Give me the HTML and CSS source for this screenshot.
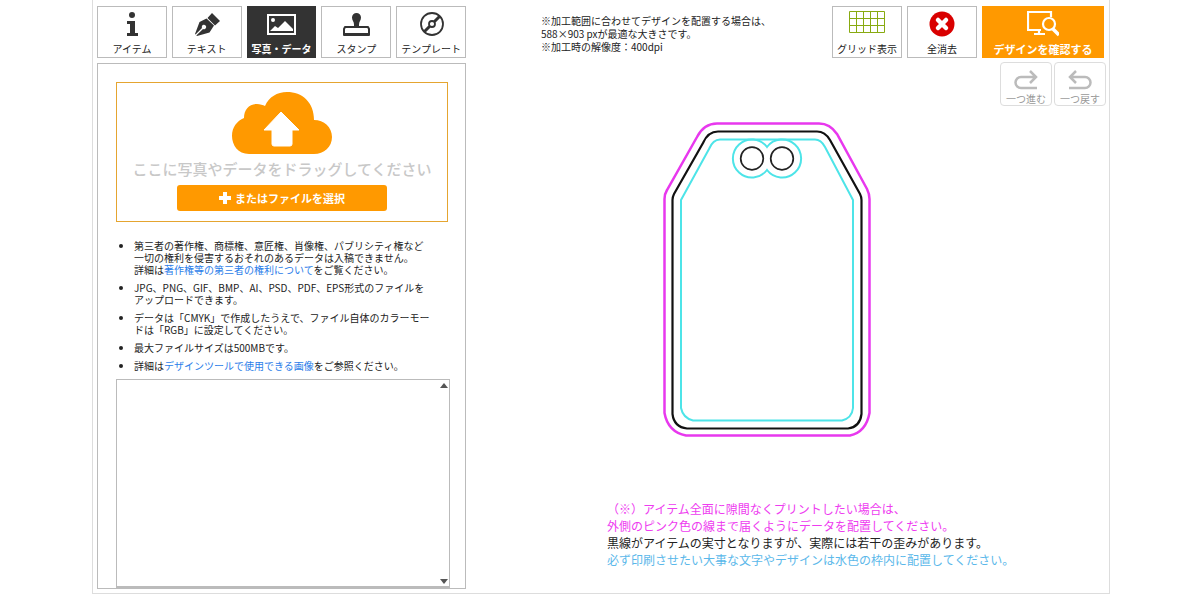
FILE: index.html
```html
<!DOCTYPE html>
<html lang="ja">
<head>
<meta charset="utf-8">
<title>デザインツール</title>
<link rel="stylesheet" href="styles.css">
</head>
<body>
<main class="tool">
  <section class="side">
    <nav class="tabs">
      <button class="tab" type="button">
        <svg class="icon" viewBox="0 0 32 28" fill="#333"><circle cx="16" cy="5" r="3"/><path d="M11 11h8v12h3v3H11v-3h3v-9h-3z"/></svg>
        <span>アイテム</span>
      </button>
      <button class="tab" type="button">
        <svg class="icon" viewBox="0 0 32 28" fill="#333"><path d="M21 3l8 8-5 4.500-7.500-7.500zM15.500 8.500l7.500 7-4.500 7L6 26l-.7-.6L12 19a2.200 2.200 0 1 0-1-1L4.500 24.500 4 24l4.500-12z"/></svg>
        <span>テキスト</span>
      </button>
      <button class="tab tab-on" type="button" aria-pressed="true">
        <svg class="icon" viewBox="0 0 32 28"><rect x="3" y="5" width="27" height="19" fill="none" stroke="#fff" stroke-width="2"/><circle cx="8" cy="10" r="2" fill="#fff"/><path d="M5 21l5-5 3 2 7-7 8 8v2z" fill="#fff"/></svg>
        <span>写真・データ</span>
      </button>
      <button class="tab" type="button">
        <svg class="icon" viewBox="0 0 32 28"><path d="M12 7.500a4.500 4.500 0 1 1 9 0c0 3-2 4-2 7v3h-5v-3c0-3-2-4-2-7z" fill="#333"/><path d="M5 17h23l1 2v6H4v-6z" fill="#fff" stroke="#333" stroke-width="2" stroke-linejoin="round"/><path d="M4 23h25v3H4z" fill="#333"/></svg>
        <span>スタンプ</span>
      </button>
      <button class="tab" type="button">
        <svg class="icon" viewBox="0 0 32 28" fill="none" stroke="#333"><circle cx="17" cy="14" r="11" stroke-width="1.800"/><circle cx="17" cy="14" r="3" stroke-width="1.800"/><path d="M19.500 11.500L25 6M14.500 16.500L9 22" stroke-width="3"/></svg>
        <span>テンプレート</span>
      </button>
    </nav>
    <div class="panel">
      <div class="drop">
        <svg class="cloud" viewBox="0 0 102 64"><path d="M18 63C7 63 1 54 1 45c0-9 5-15 12-18 0-8 5-14 13-14 3 0 6 1 8 2C38 6 46 1 56 1c15 0 27 10 27 28 10 0 18 7 18 17s-8 17-18 17z" fill="#f90"/><path d="M50 21l18 18h-7v14q0 2-2 2H43q-2 0-2-2V39h-8z" fill="#fff" stroke="#fff" stroke-linejoin="round"/></svg>
        <p class="drop-text">ここに写真やデータをドラッグしてください</p>
        <button class="pick" type="button">
          <svg class="plus" viewBox="0 0 12 12"><path d="M6 0v12M0 6h12" stroke="#fff" stroke-width="4"/></svg>
          <span>またはファイルを選択</span>
        </button>
      </div>
      <ul class="rules">
        <li>第三者の著作権、商標権、意匠権、肖像権、パブリシティ権など<br>一切の権利を侵害するおそれのあるデータは入稿できません。<br>詳細は<a href="#rights">著作権等の第三者の権利について</a>をご覧ください。</li>
        <li>JPG、PNG、GIF、BMP、AI、PSD、PDF、EPS形式のファイルを<br>アップロードできます。</li>
        <li>データは「CMYK」で作成したうえで、ファイル自体のカラーモー<br>ドは「RGB」に設定してください。</li>
        <li>最大ファイルサイズは500MBです。</li>
        <li>詳細は<a href="#images">デザインツールで使用できる画像</a>をご参照ください。</li>
      </ul>
      <div class="files">
        <svg class="arrow" viewBox="0 0 8 6"><path d="M4 0l4 5H0z" fill="#555"/></svg>
        <svg class="arrow" viewBox="0 0 8 6"><path d="M0 1h8L4 6z" fill="#555"/></svg>
      </div>
    </div>
  </section>

  <section class="work">
    <header class="head">
      <p class="size-note">※加工範囲に合わせてデザインを配置する場合は、<br>588×903 pxが最適な大きさです。<br>※加工時の解像度：400dpi</p>
      <div class="actions">
        <div class="bar">
          <button class="tab" type="button">
            <svg class="grid-icon" viewBox="0 0 38 24"><path d="M1.500 1.500h35v21h-35zM1.500 8.500h35M1.500 15.500h35M8.500 1.500v21M15.500 1.500v21M22.500 1.500v21M29.500 1.500v21" fill="none" stroke="#8a1"/></svg>
            <span>グリッド表示</span>
          </button>
          <button class="tab" type="button">
            <svg class="icon" viewBox="0 0 32 28"><circle cx="16" cy="14" r="12.500" fill="#d90000"/><path d="M12 10l8 8M20 10l-8 8" stroke="#fff" stroke-width="4.500" stroke-linecap="round"/></svg>
            <span>全消去</span>
          </button>
          <button class="confirm" type="button">
            <svg class="icon" viewBox="0 0 32 28" fill="none" stroke="#fff" stroke-width="2.200"><path d="M14 20H1V2h23v5M12 20v3M7 24h11"/><circle cx="22" cy="14" r="6"/><path d="M26 19l6 6" stroke-width="3.500"/></svg>
            <span>デザインを確認する</span>
          </button>
        </div>
        <div class="history">
          <button class="step" type="button">
            <svg class="step-icon" viewBox="0 0 26 22" fill="none" stroke="#bbb" stroke-width="2.500"><path d="M24 19H8a5.500 5.500 0 0 1 0-11h15M17 2l6 6-6 6"/></svg>
            <span>一つ進む</span>
          </button>
          <button class="step" type="button">
            <svg class="step-icon" viewBox="0 0 26 22" fill="none" stroke="#bbb" stroke-width="2.500"><path d="M2 19h16a5.500 5.500 0 0 0 0-11H3M9 2L3 8l6 6"/></svg>
            <span>一つ戻す</span>
          </button>
        </div>
      </div>
    </header>
    <div class="stage">
      <svg class="tag" viewBox="663 122 208 315" fill="none">
        <path d="M664.500 199Q664.500 194 667 190L697 137Q704 123.500 717 123.500H819Q830 123.500 837 134L867 189Q869.500 194 869.500 199V413Q866 432 850 435.500H686Q668 432 664.500 413Z" stroke="#e838ee" stroke-width="2.500"/>
        <path d="M672.500 200Q672.500 197 674 194L703 143Q708 131.500 718 131.500H817Q825 131.500 830 140L860 194Q861.500 197 861.500 200V414Q860 427 848 428.500H687Q674 427 672.500 414Z" stroke="#111" stroke-width="2.200"/>
        <path d="M681 200L709 149Q713 139.500 720 139.500H815Q821 139.500 825 147L853 200V408Q852 418 842 420.500H693Q683 418 681 408Z" stroke="#4de4e8" stroke-width="2"/>
        <path d="M767 147A19 19 0 1 0 767 170A19 19 0 1 0 767 147Z" stroke="#4de4e8" stroke-width="2"/>
        <circle cx="752" cy="158.500" r="11.300" stroke="#222" stroke-width="1.700"/>
        <circle cx="782" cy="158.500" r="11.300" stroke="#222" stroke-width="1.700"/>
      </svg>
      <p class="guide">
        <span class="pink">（※）アイテム全面に隙間なくプリントしたい場合は、<br>外側のピンク色の線まで届くようにデータを配置してください。</span><br>
        黒線がアイテムの実寸となりますが、実際には若干の歪みがあります。<br>
        <span class="blue">必ず印刷させたい大事な文字やデザインは水色の枠内に配置してください。</span>
      </p>
    </div>
  </section>
</main>
</body>
</html>
```
FILE: styles.css
```css
* {
  box-sizing: border-box;
}

body {
  margin: 0;
  padding: 0 0 6px 2px;
  background: #fff;
  color: #222;
  font: 10px/12px "Noto Sans CJK JP", sans-serif;
}

p,
ul {
  margin: 0;
  padding: 0;
}

button {
  margin: 0;
  padding: 0;
  background: #fff;
  color: inherit;
  font: inherit;
  white-space: nowrap;
}

svg {
  display: block;
}

.tool {
  display: flex;
  max-width: 1018px;
  min-height: 594px;
  margin: 0 auto;
  padding: 6px 3px 4px 4px;
  border: 1px solid #ddd;
  border-top: 0;
}

.side {
  display: flex;
  flex: 0 0 369px;
  flex-direction: column;
  gap: 5px;
}

.tabs {
  display: grid;
  grid-template-columns: repeat(5, 1fr);
  gap: 5px;
}

.tab,
.confirm {
  display: flex;
  flex-direction: column;
  align-items: center;
  justify-content: space-between;
  height: 52px;
  padding: 3px 0 2px;
  border: 1px solid #bbb;
}

.tab-on {
  border-color: #333;
  background: #333;
  color: #fff;
  font-weight: 700;
}

.icon {
  width: 32px;
  height: 28px;
}

.grid-icon {
  width: 38px;
  height: 24px;
}

.panel {
  display: flex;
  flex: 1;
  flex-direction: column;
  padding: 18px 15px 0 18px;
  border: 1px solid #bbb;
}

.drop {
  display: flex;
  flex-direction: column;
  align-items: center;
  height: 140px;
  margin-right: 2px;
  padding-top: 8px;
  border: 1px solid #e5a530;
}

.cloud {
  width: 102px;
  height: 64px;
}

.drop-text {
  padding: 4px 0 6px;
  color: #c8c8c8;
  font-size: 15px;
  font-weight: 500;
  line-height: 20px;
  white-space: nowrap;
}

.pick {
  display: flex;
  align-items: center;
  justify-content: center;
  gap: 4px;
  width: 210px;
  height: 26px;
  border: 0;
  border-radius: 3px;
  background: #f90;
  color: #fff;
  font-size: 11px;
  font-weight: 700;
}

.plus {
  width: 12px;
  height: 12px;
}

.rules {
  display: flex;
  flex-direction: column;
  gap: 6px;
  padding: 18px 0 7px 18px;
  white-space: nowrap;
}

a {
  color: #2b7de9;
  text-decoration: none;
}

.files {
  display: flex;
  flex: 1;
  flex-direction: column;
  align-items: flex-end;
  justify-content: space-between;
  padding: 3px 1px 2px;
  border: 1px solid #bbb;
  border-bottom-width: 2px;
}

.arrow {
  width: 8px;
  height: 6px;
}

.work {
  flex: 1;
  min-width: 0;
}

.head {
  display: flex;
  justify-content: space-between;
  padding-left: 75px;
}

.size-note {
  padding-top: 8px;
  line-height: 13px;
}

.actions {
  display: flex;
  flex-direction: column;
  align-items: flex-end;
  gap: 4px;
}

.bar {
  display: grid;
  grid-template-columns: 70px 70px 122px;
  gap: 5px;
  padding-right: 2px;
}

.confirm {
  border-color: #f90;
  background: #f90;
  color: #fff;
  font-size: 11px;
  font-weight: 700;
}

.history {
  display: flex;
  gap: 2px;
}

.step {
  display: flex;
  flex-direction: column;
  align-items: center;
  justify-content: space-between;
  width: 52px;
  height: 44px;
  padding: 6px 0 0;
  border: 1px solid #ddd;
  border-radius: 4px;
  color: #999;
}

.step-icon {
  width: 26px;
  height: 22px;
}

.stage {
  display: flex;
  flex-direction: column;
  align-items: flex-start;
  gap: 63px;
  padding: 16px 0 0 141px;
}

.tag {
  width: 208px;
  height: 315px;
  margin-left: 56px;
}

.guide {
  font-size: 12px;
  line-height: 17px;
  white-space: nowrap;
}

.pink {
  color: #ee3cf0;
}

.blue {
  color: #5bb8ea;
}
```
